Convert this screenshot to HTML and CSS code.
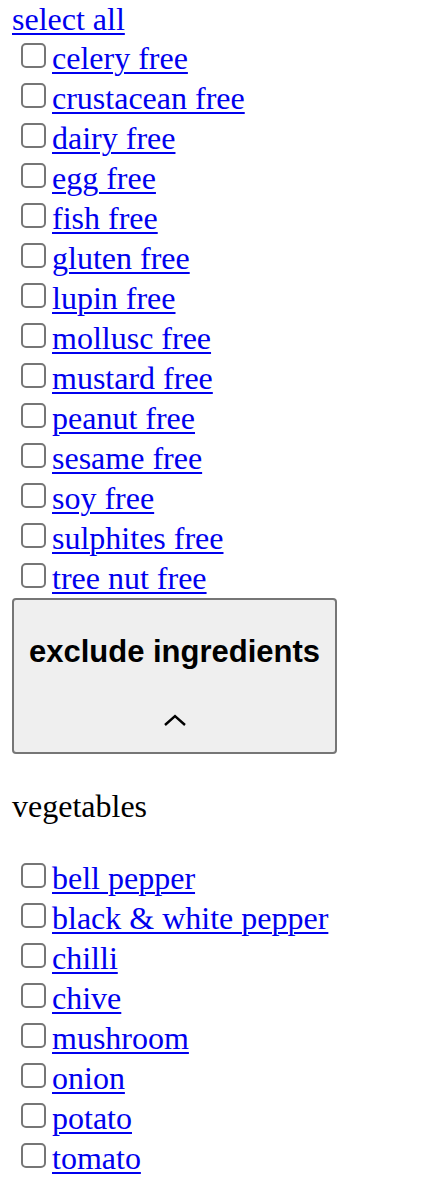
FILE: index.html
```html
<!DOCTYPE html>
<html>
<head>
<meta charset="utf-8">
<link rel="stylesheet" href="styles.css">
</head>
<body>
<div class="panel">
  <a href="#" class="select-all">select all</a>
  <ul class="list">
    <li class="row"><input type="checkbox" class="box"><a href="#">celery free</a></li>
    <li class="row"><input type="checkbox" class="box"><a href="#">crustacean free</a></li>
    <li class="row"><input type="checkbox" class="box"><a href="#">dairy free</a></li>
    <li class="row"><input type="checkbox" class="box"><a href="#">egg free</a></li>
    <li class="row"><input type="checkbox" class="box"><a href="#">fish free</a></li>
    <li class="row"><input type="checkbox" class="box"><a href="#">gluten free</a></li>
    <li class="row"><input type="checkbox" class="box"><a href="#">lupin free</a></li>
    <li class="row"><input type="checkbox" class="box"><a href="#">mollusc free</a></li>
    <li class="row"><input type="checkbox" class="box"><a href="#">mustard free</a></li>
    <li class="row"><input type="checkbox" class="box"><a href="#">peanut free</a></li>
    <li class="row"><input type="checkbox" class="box"><a href="#">sesame free</a></li>
    <li class="row"><input type="checkbox" class="box"><a href="#">soy free</a></li>
    <li class="row"><input type="checkbox" class="box"><a href="#">sulphites free</a></li>
    <li class="row"><input type="checkbox" class="box"><a href="#">tree nut free</a></li>
  </ul>
  <button class="toggle" type="button">
    <span class="toggle-label">exclude ingredients</span>
    <svg class="caret" width="24" height="14" viewBox="0 0 24 14"><polyline points="2,12 12,3 22,12" fill="none" stroke="#000" stroke-width="2.4"/></svg>
  </button>
  <p class="group-title">vegetables</p>
  <ul class="list">
    <li class="row"><input type="checkbox" class="box"><a href="#">bell pepper</a></li>
    <li class="row"><input type="checkbox" class="box"><a href="#">black &amp; white pepper</a></li>
    <li class="row"><input type="checkbox" class="box"><a href="#">chilli</a></li>
    <li class="row"><input type="checkbox" class="box"><a href="#">chive</a></li>
    <li class="row"><input type="checkbox" class="box"><a href="#">mushroom</a></li>
    <li class="row"><input type="checkbox" class="box"><a href="#">onion</a></li>
    <li class="row"><input type="checkbox" class="box"><a href="#">potato</a></li>
    <li class="row"><input type="checkbox" class="box"><a href="#">tomato</a></li>
  </ul>
</div>
</body>
</html>
```
FILE: styles.css
```css
html, body {
  margin: 0;
  padding: 0;
  background: #fff;
}
body {
  font-family: "Liberation Serif", "Times New Roman", serif;
  font-size: 32px;
  color: #000;
}
.panel {
  padding: 0 12px;
}
a {
  color: #0000ee;
  text-decoration: underline;
  text-decoration-thickness: 2px;
  text-underline-offset: 3px;
}
.select-all {
  display: block;
  width: max-content;
  line-height: 38px;
  height: 38px;
}
.list {
  list-style: none;
  margin: 0;
  padding: 0 0 0 8px;
}
.row {
  display: flex;
  align-items: center;
  height: 40px;
  line-height: 42px;
}
.box {
  appearance: none;
  -webkit-appearance: none;
  box-sizing: border-box;
  width: 25px;
  height: 25px;
  margin: 0 6px 6px 1px;
  border: 2px solid #767676;
  border-radius: 5px;
  background: #fff;
}
.toggle {
  display: flex;
  flex-direction: column;
  align-items: center;
  box-sizing: border-box;
  width: 325px;
  height: 156px;
  margin: 0;
  padding: 34px 0 0;
  border: 2px solid #767676;
  border-radius: 4px;
  background: #efefef;
  font-family: "Liberation Sans", Arial, sans-serif;
  font-weight: bold;
  font-size: 31px;
  color: #000;
}
.toggle-label {
  line-height: 36px;
}
.caret {
  margin-top: 43px;
}
.group-title {
  margin: 32px 0;
  line-height: 40px;
  height: 40px;
}
```
